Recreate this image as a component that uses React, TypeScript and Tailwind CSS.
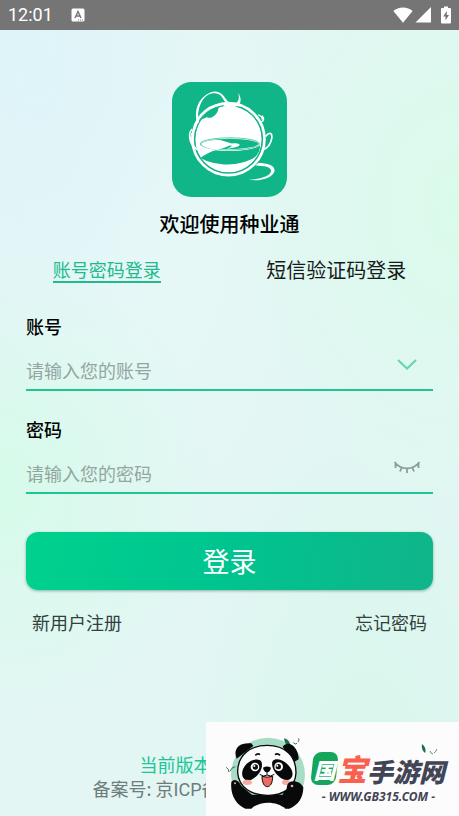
import { useState } from 'react'

function StatusBar() {
  return (
    <header className="flex h-[30px] items-center bg-[#757575] px-2 text-white">
      <span className="font-[Roboto] text-lg leading-none">12:01</span>
      <svg className="ml-[18px] size-[14px]" viewBox="0 0 14 14" fill="none">
        <rect x="0.5" y="0.5" width="13" height="13" rx="1.5" fill="#fff" />
        <path d="M4 10 7 3.5 10 10M5 8h4" stroke="#757575" strokeWidth="1.4" />
        <path d="M7 12h1M9 12h1M11 12h1" stroke="#757575" strokeWidth="1" />
      </svg>
      <div className="ml-auto flex items-center">
        <svg className="h-[16px] w-[20px]" viewBox="0 0 20 16" fill="#fff">
          <path d="M10 15.8 0.4 4C3 1.7 6.200 .4 10 .4s7 1.300 9.600 3.600z" />
        </svg>
        <svg className="ml-0.5 size-4" viewBox="0 0 16 16" fill="#fff">
          <path d="M16 0v15.500H.5z" />
        </svg>
        <svg className="ml-2.5 h-[18px] w-[10px]" viewBox="0 0 10 18" fill="#fff">
          <path d="M3 .5h4V2h2q1 0 1 1v13.500q0 1-1 1H1q-1 0-1-1V3q0-1 1-1h2z" />
          <path d="M5.800 5 2.200 10.500h2.300v4L8 9H5.800z" fill="#757575" />
        </svg>
      </div>
    </header>
  )
}

function AppLogo() {
  return (
    <svg className="size-[115px]" viewBox="0 0 342 342" fill="none" role="img" aria-label="种业通">
      <rect width="342" height="342" rx="58" fill="#10b588" />
      {/* globe */}
      <circle cx="168" cy="170" r="99" fill="#fff" />
      <path d="M70 100C76 112 92 112 104 104C112 112 136 100 138 78C142 74 140 70 136 66L96 60Z" fill="#10b588" />
      <path d="M84 226C100 214 118 206 130 203C180 208 228 206 262 188C262 202 256 216 246 224C206 250 138 254 84 226Z" fill="#10b588" />
      <ellipse cx="172" cy="184" rx="88" ry="18" fill="#10b588" stroke="#fff" strokeWidth="5" />
      <ellipse cx="172" cy="184" rx="88" ry="18" stroke="#10b588" strokeWidth="2" />
      <path d="M87 184C94 176 124 171 146 173L178 183C192 181 202 183 201 188C196 194 180 196 162 199C182 191 180 188 172 189C160 194 148 199 134 202C106 198 90 192 87 184Z" fill="#fff" />
      {/* outer ring */}
      <circle cx="168" cy="170" r="101" stroke="#10b588" strokeWidth="4" />
      <circle cx="168" cy="170" r="107" stroke="#fff" strokeWidth="8" />
      {/* vines */}
      <path d="M76 124C58 70 96 30 128 28C154 28 158 54 172 62C190 70 204 58 197 32C212 56 202 74 182 74C162 74 156 54 146 42C128 22 72 34 80 120Z" fill="#fff" />
      <path d="M80 118C70 66 104 34 132 35C146 38 152 58 164 66C140 66 100 82 80 118Z" fill="#10b588" />
      <path d="M162 60C172 70 188 70 198 60L206 72H152Z" fill="#fff" />
      <path d="M66 140C76 96 112 66 168 63" stroke="#fff" strokeWidth="8" />
      <path d="M60 140C44 156 54 186 70 200M58 152C52 170 60 190 76 202" stroke="#fff" strokeWidth="4" />
      <path d="M256 98Q270 102 268 112M262 118C272 120 276 108 268 100" stroke="#fff" strokeWidth="4" />
      <path d="M278 162C288 148 298 150 297 166C294 184 286 196 270 202" stroke="#fff" strokeWidth="5" />
      <path d="M256 241C284 241 306 248 305 264C302 284 264 297 228 291C262 289 294 280 295 264C294 252 276 249 248 248Z" fill="#fff" />
    </svg>
  )
}

function PandaArt() {
  return (
    <svg className="size-[86px]" viewBox="0 0 258 258" aria-hidden="true">
      <circle cx="132" cy="134" r="111" fill="#a9dcc5" />
      <path d="M180 25c14 4 20 13 18 28-11-6-17-16-18-28z" fill="#176c51" />
      <path d="M208 38q6 7 11 2M222 36q5-5 2-11M7 112q8 6 8 14M18 124q4-12 16-14" stroke="#3c6d5b" strokeWidth="3" fill="none" />
      {/* body and arms */}
      <path d="M22 156C30 144 44 150 52 168L84 194H176L190 164C202 148 230 152 238 172C238 204 222 226 196 236H64C36 224 18 194 22 156Z" fill="#07090a" />
      <path d="M82 236C106 212 158 212 184 236Q132 258 82 236Z" fill="#fcfcfc" />
      {/* ears and head */}
      <path d="M38 86C26 58 44 36 82 40L88 48ZM176 50C194 28 224 52 224 88L210 96Z" fill="#07090a" />
      <path d="M41 128C40 76 78 46 130 46C184 46 216 78 216 128C214 172 178 197 130 196C82 196 44 172 41 128Z" fill="#fcfcfc" stroke="#07090a" strokeWidth="4" />
      <path d="M94 76q7-7 14-2M153 74q8-6 15 2" stroke="#07090a" strokeWidth="5" fill="none" />
      <path d="M111 93C120 108 108 136 82 149C62 156 50 142 56 120C64 96 96 80 111 93ZM146 93C158 80 190 94 202 118C212 138 200 152 184 150C158 142 138 110 146 93Z" fill="#07090a" />
      <circle cx="93" cy="111" r="13" fill="#fff" />
      <circle cx="164" cy="110" r="13" fill="#fff" />
      <circle cx="94" cy="111" r="8" fill="#111" />
      <circle cx="163" cy="110" r="8" fill="#111" />
      <circle cx="91" cy="108" r="3" fill="#fff" />
      <circle cx="160" cy="107" r="3" fill="#fff" />
      <path d="M117 113q12-7 24 0-2 12-12 14-10-2-12-14z" fill="#07090a" />
      <path d="M129 125v9M107 133q12 9 22 2 11 7 22-2" stroke="#07090a" strokeWidth="3" fill="none" />
      <path d="M114 139q15 5 32 0c0 20-7 31-16 31s-16-11-16-31z" fill="#ef6b62" stroke="#07090a" strokeWidth="3" />
      <ellipse cx="70" cy="157" rx="14" ry="8" fill="#f6aca2" />
      <ellipse cx="186" cy="157" rx="12" ry="8" fill="#f6aca2" />
      <path d="M190 164C200 148 218 154 224 162L226 194H184Z" fill="#07090a" />
      <circle cx="33" cy="160" r="3" fill="#f6aca2" />
      <circle cx="204" cy="168" r="4" fill="#f6aca2" />
    </svg>
  )
}

function SiteBadge() {
  return (
    <aside className="absolute right-0 bottom-0 flex h-[94px] w-[253px] bg-[#fcfcfc] pt-2 pl-[18px]">
      <PandaArt />
      <div className="relative flex flex-col pt-[22px] pl-0.5 font-black text-[#414555] italic">
        <svg className="absolute top-3.5 right-2 h-3 w-4" viewBox="0 0 16 12" aria-hidden="true">
          <path d="M1 0q5 4 3 9-4-3-3-9z" fill="#176c51" />
          <path d="M9 7q1 3 3 3M13 9q2-1 3-4" stroke="#489879" fill="none" />
        </svg>
        <div className="flex items-center">
          <span className="relative flex h-[33px] w-[25px] items-center justify-center text-[22px] leading-none text-white">
            <span className="absolute inset-0 -skew-x-6 rounded-lg bg-[#15a65c]" />
            <span className="relative">国</span>
          </span>
          <span className="text-[30px] leading-[33px] text-[#f9604f]">宝</span>
          <span className="pt-1 text-[26px] leading-[29px]">手游网</span>
        </div>
        <span className="pt-0.5 text-center font-['Noto_Sans'] text-xs leading-5 font-bold whitespace-nowrap">- WWW.GB315.COM -</span>
      </div>
    </aside>
  )
}

const fieldClass = 'flex h-10 border-b-2 border-[#20c596]'
const inputClass = 'min-w-0 flex-1 bg-transparent text-lg text-black outline-none placeholder:text-[#94a5a1]'

export default function App() {
  const [showPassword, setShowPassword] = useState(false)

  return (
    <div
      className="relative flex min-h-screen flex-col overflow-hidden bg-[#e3f6f4] bg-[radial-gradient(ellipse_at_8%_8%,#dff4f9_0%,transparent_30%),radial-gradient(ellipse_at_0%_60%,#d6fbea_0%,transparent_34%),radial-gradient(ellipse_at_100%_25%,#dafbeb_0%,transparent_36%),radial-gradient(ellipse_at_80%_100%,#d6f7ea_0%,transparent_36%),radial-gradient(ellipse_at_30%_28%,#e7f8f7_0%,transparent_40%)] font-['Noto_Sans_CJK_SC',sans-serif]"
    >
      <StatusBar />
      <main className="flex flex-1 flex-col pt-[52px]">
        <div className="flex flex-col items-center">
          <AppLogo />
          <h1 className="mt-3 text-[20px] leading-[30px] font-medium text-black">欢迎使用种业通</h1>
        </div>

        <nav className="mt-4 flex items-center justify-around">
          <button type="button" className="border-b-2 border-[#20ba8c] text-lg leading-6 text-[#20ba8c]">
            账号密码登录
          </button>
          <button type="button" className="text-[20px] leading-[30px] text-[#151b1a]">
            短信验证码登录
          </button>
        </nav>

        <form className="mt-[29px] px-[26px]" onSubmit={(e) => e.preventDefault()}>
          <label htmlFor="account" className="block text-lg leading-6 font-medium text-black">
            账号
          </label>
          <div className={`mt-[13px] ${fieldClass}`}>
            <input id="account" type="text" placeholder="请输入您的账号" className={inputClass} />
            <button type="button" aria-label="选择账号" className="flex h-[26px] w-[52px] items-center justify-center">
              <svg className="h-[11px] w-5" viewBox="0 0 20 11" fill="none">
                <path d="m1 1 9 8.500L19 1" stroke="#65d4b2" strokeWidth="2" />
              </svg>
            </button>
          </div>

          <label htmlFor="password" className="mt-[26px] block text-lg leading-6 font-medium text-black">
            密码
          </label>
          <div className={`mt-[13px] ${fieldClass}`}>
            <input
              id="password"
              type={showPassword ? 'text' : 'password'}
              placeholder="请输入您的密码"
              className={inputClass}
            />
            <button
              type="button"
              aria-label="显示密码"
              onClick={() => setShowPassword(!showPassword)}
              className="flex h-[26px] w-[52px] items-center justify-center"
            >
              <svg className="h-[13px] w-[26px]" viewBox="0 0 26 13" fill="none" stroke="#8b9b98" strokeWidth="1.800">
                <path d="M.5 1C7 9.500 19 9.500 25.500 1M1.500 2.500V7M7.500 7 6 10.500M13 7.500V12M18.500 7 20 10.500M24.500 2.500V7" />
              </svg>
            </button>
          </div>

          <button
            type="submit"
            className="mt-[38px] h-[58px] w-full rounded-xl bg-[linear-gradient(100deg,#00d18e_0%,#00c48f_50%,#10b58a_100%)] text-[27px] text-white shadow-[0_1px_3px_rgba(0,70,50,0.4)]"
          >
            登录
          </button>
        </form>

        <div className="mt-5 flex justify-between px-8 text-lg leading-6 text-[#33403d]">
          <a href="#register">新用户注册</a>
          <a href="#forgot">忘记密码</a>
        </div>

        <footer className="mt-auto pb-3.5 text-lg leading-6 text-[#6d7d79]">
          <p className="mx-auto w-[180px] text-[#20c596]">当前版本</p>
          <p className="mx-auto w-[274px]">
            备案号: 京<span className="font-[Roboto]">ICP</span>备
          </p>
        </footer>
      </main>
      <SiteBadge />
    </div>
  )
}
